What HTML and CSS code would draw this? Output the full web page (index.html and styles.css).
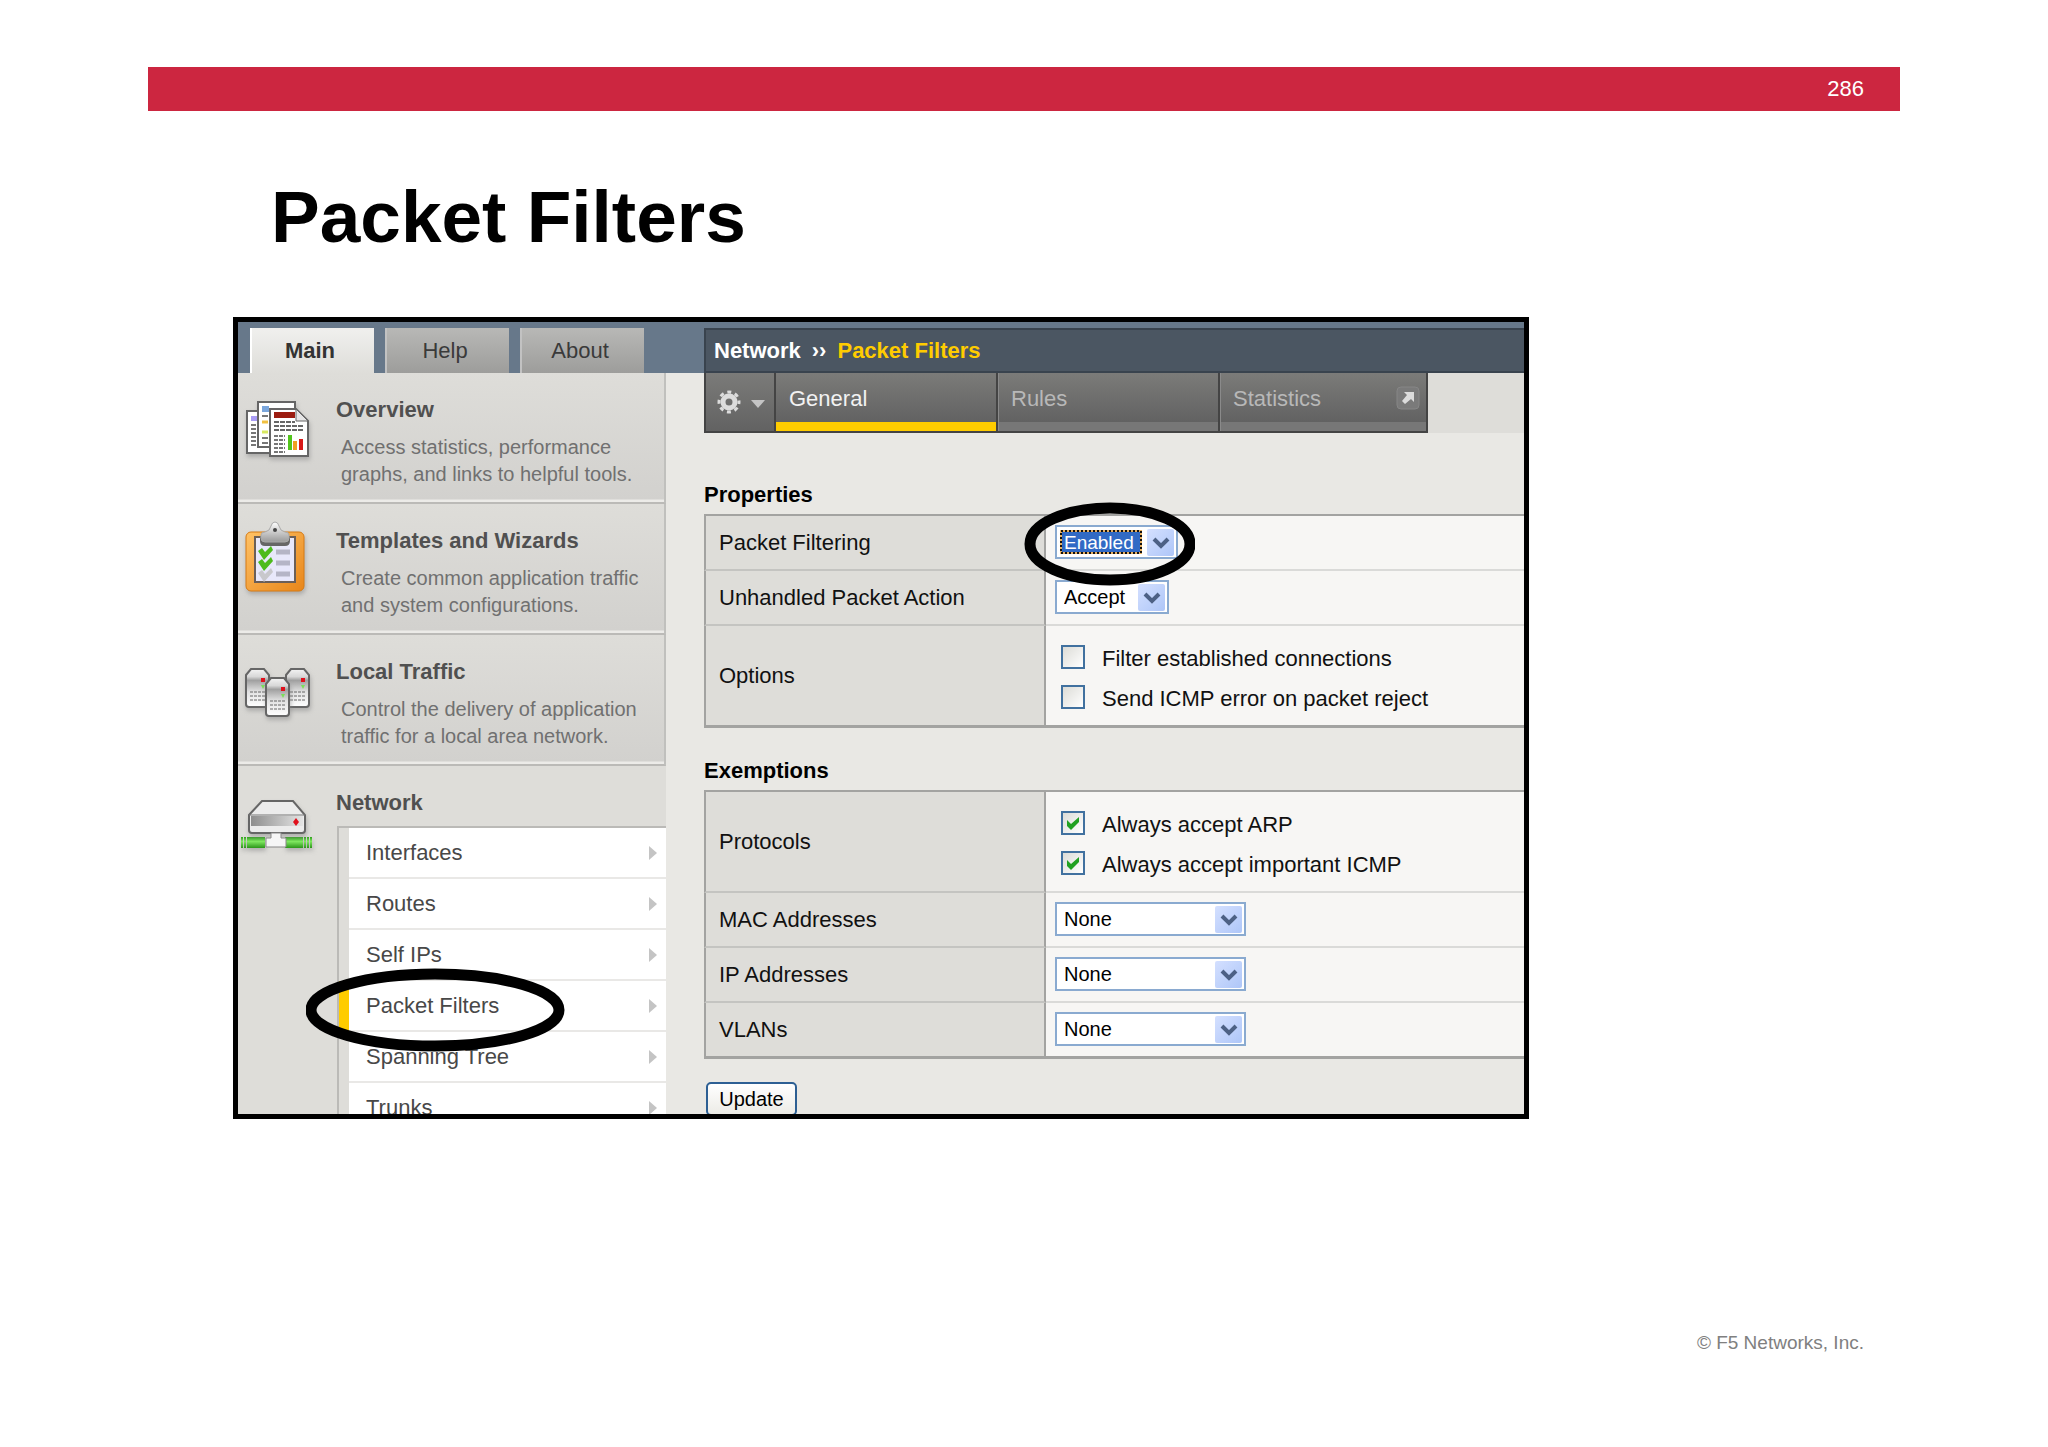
FILE: index.html
```html
<!DOCTYPE html>
<html lang="en">
<head>
  <meta charset="UTF-8" />
  <title>Packet Filters</title>
  <link rel="stylesheet" href="styles.css">
</head>
<body>

  <header class="slide-bar">286</header>
  <h1 class="slide-title">Packet Filters</h1>

  <div class="window">

    <aside class="sidebar">
      <nav class="tabs">
        <a class="tab active" href="#">Main</a>
        <a class="tab" href="#">Help</a>
        <a class="tab" href="#">About</a>
      </nav>

      <section class="item">
        <svg class="item-icon" viewBox="0 0 98 100">
          <g class="shadow">
            <path d="M9 38h30v42H9z" fill="#fff" stroke="#666" stroke-width="2"/>
            <path d="M20 29h37v45H20z" fill="#fff" stroke="#666" stroke-width="2"/>
            <path d="M32 36h26l12 12v35H32z" fill="#fff" stroke="#666" stroke-width="2"/>
          </g>
          <path d="M13 43h6v5h-6z" fill="#a99cf5"/>
          <path d="M13 52h5M13 56h5M13 60h5M13 64h5M13 68h5M13 72h5" stroke="#777" stroke-width="2"/>
          <path d="M24 33h7v6h-7z" fill="#7aa6dc"/>
          <path d="M24 43h6M24 65h6M24 70h6" stroke="#777" stroke-width="2"/>
          <path d="M24 49h6" stroke="#f0c040" stroke-width="3"/>
          <path d="M24 59h6" stroke="#d8e860" stroke-width="3"/>
          <path d="M58 36v12h12z" fill="#e6e6e6" stroke="#666" stroke-width="1"/>
          <path d="M36 39h21v6H36z" fill="#9c1c10"/>
          <path d="M36 49h21M36 53h29M36 57h29" stroke="#666" stroke-width="2" stroke-dasharray="5 1"/>
          <path d="M36 63h11M36 67h11M36 71h11M36 75h11M36 79h11" stroke="#777" stroke-width="2" stroke-dasharray="4 1"/>
          <path d="M50 62h4v15h-4z" fill="#52c41c"/>
          <path d="M55 68h4v9h-4z" fill="#f0a020"/>
          <path d="M61 66h4v11h-4z" fill="#d81818"/>
        </svg>
        <div class="item-text">
          <h2>Overview</h2>
          <p>Access statistics, performance<br>graphs, and links to helpful tools.</p>
        </div>
      </section>

      <section class="item">
        <svg class="item-icon" viewBox="0 0 98 100">
          <defs>
            <linearGradient id="board" x1="0" x2="1" y2="1">
              <stop offset="0" stop-color="#ffc266"/>
              <stop offset="1" stop-color="#e8861a"/>
            </linearGradient>
            <linearGradient id="clip" x2="0" y2="1">
              <stop offset="0" stop-color="#fff"/>
              <stop offset="1" stop-color="#999"/>
            </linearGradient>
          </defs>
          <rect class="shadow" x="8" y="28" width="58" height="59" rx="5" fill="url(#board)" stroke="#d67a14"/>
          <path d="M17 33h40v45H17z" fill="#e8e8fb" stroke="#6b5f58" stroke-width="2"/>
          <path d="M22 33h30v4q0 5-5 5H27q-5 0-5-5z" fill="#666"/>
          <path d="M23 31q0-3 4-3 5-1 6-6 1-4 4-4t4 4q1 5 6 6 4 0 4 3v3q0 4-4 4H27q-4 0-4-4z" fill="url(#clip)" stroke="#aaa"/>
          <circle cx="37" cy="26" r="2" fill="#444"/>
          <path d="M20 47l4-3 3 4 6-6 2 4-9 10zM20 58l4-3 3 4 6-6 2 4-9 10z" fill="#4dbb1c"/>
          <path d="M20 69l4-3 3 4 6-6 2 4-9 10z" fill="#c8c8cc"/>
          <path d="M38 48h14M38 59h14M38 70h14" stroke="#b5b5c6" stroke-width="5"/>
        </svg>
        <div class="item-text">
          <h2>Templates and Wizards</h2>
          <p>Create common application traffic<br>and system configurations.</p>
        </div>
      </section>

      <section class="item">
        <svg class="item-icon" viewBox="0 0 98 100">
          <defs>
            <linearGradient id="metal" x2="0" y2="1">
              <stop offset="0" stop-color="#f4f4f4"/>
              <stop offset=".2" stop-color="#d8d8d8"/>
              <stop offset=".3" stop-color="#a0a0a0"/>
              <stop offset=".6" stop-color="#e2e2e2"/>
              <stop offset="1" stop-color="#fff"/>
            </linearGradient>
            <g id="server">
              <path class="shadow" d="M1 7l5-6h13l5 6v29q0 3-3 3H4q-3 0-3-3z" fill="url(#metal)" stroke="#666" stroke-width="2"/>
              <path d="M16 10h4v4h-4z" fill="#e0101c"/>
              <path d="M16 17h4l-2 4z" fill="#7be05a"/>
              <path d="M5 24h15M5 28h15M5 32h15" stroke="#666" stroke-width="1" stroke-dasharray="3 1"/>
            </g>
          </defs>
          <use href="#server" x="7" y="33"/>
          <use href="#server" x="47" y="33"/>
          <use href="#server" x="27" y="42"/>
        </svg>
        <div class="item-text">
          <h2>Local Traffic</h2>
          <p>Control the delivery of application<br>traffic for a local area network.</p>
        </div>
      </section>

      <section class="item open">
        <svg class="item-icon" viewBox="0 0 98 100">
          <defs>
            <linearGradient id="front" x2="1">
              <stop offset="0" stop-color="#8e8e8e"/>
              <stop offset="1" stop-color="#e4e4e4"/>
            </linearGradient>
            <linearGradient id="cable" x2="0" y2="1">
              <stop offset="0" stop-color="#2f9e1c"/>
              <stop offset=".4" stop-color="#7fe860"/>
              <stop offset="1" stop-color="#2c961a"/>
            </linearGradient>
          </defs>
          <path class="shadow" d="M3 71h2v11H3zM6 71h2v11H6zM9 71h18v11H9zM47 71h18v11H47zM66 71h2v11h-2zM69 71h2v11h-2zM72 71h2v11h-2z" fill="url(#cable)"/>
          <path class="shadow" d="M11 49l13-14h31l12 14v15q0 3-3 3H14q-3 0-3-3z" fill="#ececec" stroke="#666" stroke-width="2"/>
          <path d="M13 50h52v10H13z" fill="url(#front)"/>
          <path d="M11 49h56" stroke="#777" stroke-width="1"/>
          <path d="M58 52l3 4-3 4-3-4z" fill="#e0101c"/>
          <path d="M33 67h10v5h5v9H28v-9h5z" fill="#f6f6f6" stroke="#888" stroke-width="1"/>
        </svg>
        <div class="item-text">
          <h2>Network</h2>
          <ul class="menu">
            <li><a href="#">Interfaces</a></li>
            <li><a href="#">Routes</a></li>
            <li><a href="#">Self IPs</a></li>
            <li class="current">
              <a href="#">Packet Filters</a>
              <svg class="ring ring-menu" viewBox="0 0 259 84">
                <ellipse cx="129" cy="42" rx="124" ry="36"/>
              </svg>
            </li>
            <li><a href="#">Spanning Tree</a></li>
            <li><a href="#">Trunks</a></li>
          </ul>
        </div>
      </section>
    </aside>

    <main class="content">
      <div class="crumbs">
        <span>Network</span>
        <span class="arrows">››</span>
        <span class="here">Packet Filters</span>
      </div>

      <nav class="subnav">
        <button class="gear" type="button" aria-label="Options">
          <svg width="68" height="58" viewBox="0 0 68 58">
            <g stroke="#dcdcdc" fill="none">
              <circle cx="23" cy="29" r="6" stroke-width="5"/>
              <circle cx="23" cy="29" r="10" stroke-width="3" stroke-dasharray="4 3.85" stroke-dashoffset="2"/>
            </g>
            <path d="M45 27h14l-7 8z" fill="#c4c4c4"/>
          </svg>
        </button>
        <a class="active" href="#">General</a>
        <a href="#">Rules</a>
        <a class="stats" href="#">Statistics
          <svg width="24" height="24" viewBox="0 0 24 24">
            <rect x="1" y="1" width="22" height="22" rx="4" fill="#7a7a7a" stroke="#868686"/>
            <path d="M8 6h10v10l-3-3-6 5-3-3 5-6z" fill="#dcdcdc"/>
          </svg>
        </a>
      </nav>

      <form>
        <h3 class="properties">Properties</h3>
        <table>
          <tr>
            <th><label for="filtering">Packet Filtering</label></th>
            <td>
              <span class="ringed">
                <select id="filtering" class="focused">
                  <option>Enabled</option>
                  <option>Disabled</option>
                </select>
                <svg class="ring ring-select" viewBox="0 0 171 84">
                  <ellipse cx="86" cy="42" rx="80" ry="36"/>
                </svg>
              </span>
            </td>
          </tr>
          <tr>
            <th><label for="action">Unhandled Packet Action</label></th>
            <td>
              <select id="action" class="short">
                <option>Accept</option>
                <option>Discard</option>
              </select>
            </td>
          </tr>
          <tr>
            <th>Options</th>
            <td class="checks">
              <label><input type="checkbox">Filter established connections</label>
              <label><input type="checkbox">Send ICMP error on packet reject</label>
            </td>
          </tr>
        </table>

        <h3>Exemptions</h3>
        <table>
          <tr>
            <th>Protocols</th>
            <td class="checks">
              <label><input type="checkbox" checked>Always accept ARP</label>
              <label><input type="checkbox" checked>Always accept important ICMP</label>
            </td>
          </tr>
          <tr>
            <th><label for="mac">MAC Addresses</label></th>
            <td><select id="mac"><option>None</option></select></td>
          </tr>
          <tr>
            <th><label for="ip">IP Addresses</label></th>
            <td><select id="ip"><option>None</option></select></td>
          </tr>
          <tr>
            <th><label for="vlans">VLANs</label></th>
            <td><select id="vlans"><option>None</option></select></td>
          </tr>
        </table>

        <button class="update" type="button">Update</button>
      </form>
    </main>
  </div>

  <footer class="slide-footer">© F5 Networks, Inc.</footer>

</body>
</html>
```
FILE: styles.css
```css
* {
  box-sizing: border-box;
}

body {
  display: flex;
  flex-direction: column;
  min-height: 100vh;
  margin: 0;
  padding: 67px 148px 91px;
  background: #fff;
  color: #111;
  font-family: "Liberation Sans", Arial, sans-serif;
  font-size: 22px;
  line-height: 26px;
}

h1, h2, h3, p, ul {
  margin: 0;
  padding: 0;
}

a {
  color: inherit;
  text-decoration: none;
}

/* Slide */
.slide-bar {
  padding: 9px 36px;
  background: #cc2640;
  color: #fff;
  text-align: right;
}

.slide-title {
  margin: 64px 0 58px 123px;
  color: #000;
  font-size: 73px;
  line-height: 84px;
}

.slide-footer {
  margin-top: auto;
  padding-right: 36px;
  color: #808080;
  font-size: 19px;
  text-align: right;
}

/* Window */
.window {
  display: flex;
  width: 74%;
  margin-left: 85px;
  aspect-ratio: 1295 / 801;
  min-height: 0;
  border: 5px solid #000;
  background: linear-gradient(#67788a 51px, #e9e8e4 51px);
  overflow: hidden;
}

.sidebar {
  flex: none;
  width: 428px;
}

.tabs {
  display: flex;
  gap: 11px;
  padding: 6px 12px 0;
}

.tab {
  width: 124px;
  height: 45px;
  padding: 10px 6px 10px 0;
  border-left: 2px solid #c2c2c2;
  background: linear-gradient(#b8b8b6, #9d9d9b);
  color: #3a3a3a;
  text-align: center;
}

.tab.active {
  border-color: #fff;
  background: linear-gradient(#f0f0ee, #deddd9);
  color: #333;
  font-weight: bold;
}

/* Sidebar items */
.item {
  display: grid;
  grid-template-columns: 98px 1fr;
  height: 131px;
  border-right: 2px solid #c0c0bd;
  border-bottom: 2px solid #bbbab7;
  background: linear-gradient(#deddd9, #d2d1ce 126px, #ecebe8 127px);
  color: #505050;
}

.item.open {
  height: auto;
  border: none;
  background: #deddd9;
}

.item-icon {
  width: 98px;
  height: 100px;
}

.shadow {
  filter: drop-shadow(1px 3px 2px #8888);
}

.item-text {
  padding-top: 24px;
}

.item h2 {
  font-size: 22px;
  line-height: 26px;
}

.item p {
  margin-top: 11px;
  padding-left: 5px;
  color: #707070;
  font-size: 20px;
  line-height: 27px;
  white-space: nowrap;
}

.menu {
  margin: 10px 0 0 1px;
  border-top: 2px solid #bbbab7;
  border-left: 2px solid #bbbab7;
  list-style: none;
}

.menu li {
  position: relative;
  border-left: 10px solid #deddd9;
}

.menu .current {
  border-color: #fc0;
  z-index: 1;
}

.menu a {
  display: flex;
  align-items: center;
  justify-content: space-between;
  height: 51px;
  padding: 0 9px 0 17px;
  border-bottom: 2px solid #e9e8e6;
  background: #fff;
  color: #484848;
}

.menu a::after {
  content: "";
  border: 7px solid transparent;
  border-left: 8px solid #c4c4c4;
  border-right: none;
}

/* Hand drawn highlights */
.ring {
  position: absolute;
  fill: none;
  stroke: #000;
  stroke-width: 11px;
  pointer-events: none;
}

.ring-menu {
  top: -13px;
  left: -43px;
  width: 259px;
  height: 84px;
}

.ringed {
  display: block;
  position: relative;
}

.ring-select {
  top: -23px;
  left: -31px;
  width: 171px;
  height: 84px;
}

/* Content */
.content {
  flex: 1;
  min-width: 0;
  padding: 6px 0 0 38px;
}

.crumbs {
  display: flex;
  gap: 11px;
  height: 45px;
  padding: 8px;
  border: 2px solid #39434e;
  border-right: none;
  background: #4b5662;
  color: #fff;
  font-weight: bold;
}

.crumbs .here {
  color: #fc0;
}

.subnav {
  display: flex;
  height: 60px;
  background: #deddd9;
  color: #b8b8b8;
}

.subnav > * {
  border: solid #444;
  border-width: 0 2px 2px 0;
}

.subnav .gear {
  width: 72px;
  padding: 0;
  border-left-width: 2px;
  background: linear-gradient(#7b7b79, #626262);
}

.subnav a {
  width: 222px;
  padding: 13px 13px 0;
  background: linear-gradient(#7b7b79, #626262 49px, #777 49px);
  box-shadow: inset 1px 0 #8a8a8a;
}

.subnav .active {
  background: linear-gradient(#7b7b79, #626262 49px, #fc0 49px);
  box-shadow: none;
  color: #f2f2f2;
}

.subnav .stats {
  display: flex;
  justify-content: space-between;
  width: 208px;
  padding-right: 6px;
}

h3 {
  margin: 30px 0 6px;
  color: #000;
  font-size: 22px;
}

.properties {
  margin-top: 49px;
}

table {
  width: 100%;
  border-top: 2px solid #a3a3a1;
  border-bottom: 1px solid #a3a3a1;
  border-spacing: 0;
}

th {
  width: 342px;
  padding: 0 13px;
  border: 2px solid #a3a3a1;
  border-width: 0 2px 2px;
  border-bottom-color: #c4c4c1;
  background: #deddd9;
  font-weight: normal;
  text-align: left;
}

td {
  padding: 9px 9px 10px;
  border-bottom: 2px solid #dadad8;
  background: #f7f6f4;
}

tr:last-child > * {
  border-bottom-color: #a3a3a1;
}

.checks {
  padding: 19px 15px 12px;
}

.checks label {
  display: flex;
  gap: 17px;
  line-height: 28px;
}

.checks label + label {
  margin-top: 12px;
}

/* Controls */
input {
  appearance: none;
  width: 24px;
  height: 24px;
  margin: 0;
  border: 2px solid #41719f;
  background: linear-gradient(135deg, #dcdcd7, #fff);
}

input:checked {
  background: url("data:image/svg+xml,%3Csvg xmlns='http://www.w3.org/2000/svg' width='20' height='20'%3E%3Cpath d='M4 7l4 4 8-7v5l-8 8-4-4z' fill='%2321a121'/%3E%3C/svg%3E"), linear-gradient(135deg, #dcdcd7, #fff);
}

select {
  display: block;
  appearance: none;
  width: 191px;
  height: 34px;
  padding: 0 0 0 7px;
  border: 2px solid #8aaad0;
  border-radius: 0;
  background: #fff url("data:image/svg+xml,%3Csvg xmlns='http://www.w3.org/2000/svg' width='27' height='27'%3E%3ClinearGradient id='g' x2='1' y2='1'%3E%3Cstop stop-color='%23d4e0ff'/%3E%3Cstop offset='1' stop-color='%23aec6f8'/%3E%3C/linearGradient%3E%3Crect width='27' height='27' rx='2' fill='url(%23g)'/%3E%3Cpath d='M7 10l7 7 7-7' fill='none' stroke='%234d6185' stroke-width='4'/%3E%3C/svg%3E") no-repeat right 2px top 2px;
  color: #000;
  font-family: inherit;
  font-size: 20px;
}

.short {
  width: 114px;
}

.focused {
  width: 123px;
  background-image: url("data:image/svg+xml,%3Csvg xmlns='http://www.w3.org/2000/svg' width='27' height='27'%3E%3ClinearGradient id='g' x2='1' y2='1'%3E%3Cstop stop-color='%23d4e0ff'/%3E%3Cstop offset='1' stop-color='%23aec6f8'/%3E%3C/linearGradient%3E%3Crect width='27' height='27' rx='2' fill='url(%23g)'/%3E%3Cpath d='M7 10l7 7 7-7' fill='none' stroke='%234d6185' stroke-width='4'/%3E%3C/svg%3E"), url("data:image/svg+xml,%3Csvg xmlns='http://www.w3.org/2000/svg' width='82' height='24'%3E%3Cpath d='M0 0h82v24H0z' fill='%23316ac5'/%3E%3Cpath d='M1 1h80v22H1z' fill='none' stroke='%23e8b060' stroke-width='2'/%3E%3Cpath d='M1 1h80v22H1z' fill='none' stroke='%23111' stroke-width='2' stroke-dasharray='2'/%3E%3C/svg%3E");
  background-position: right 2px top 2px, left 3px top 3px;
  color: #fff;
  font-size: 19px;
}

.update {
  width: 91px;
  height: 34px;
  margin: 23px 2px 0;
  padding: 0;
  border: 2px solid #2d5f93;
  border-radius: 5px;
  background: linear-gradient(#fff, #ecebe6);
  color: #000;
  font-family: inherit;
  font-size: 20px;
}
```
